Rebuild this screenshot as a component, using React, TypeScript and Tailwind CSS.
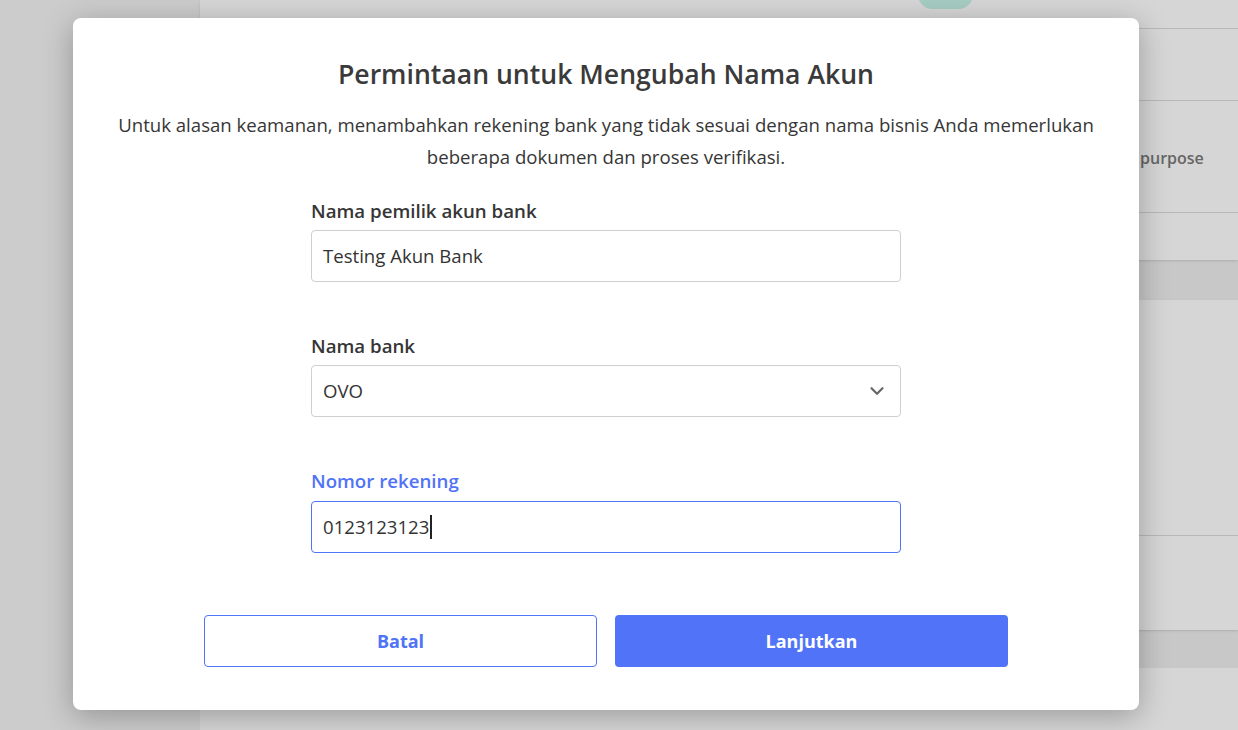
import { ChevronDown } from 'lucide-react';

export default function App() {
  return (
    <div className="relative h-[730px] w-[1238px] overflow-hidden font-['Open_Sans',sans-serif]">
      {/* Page behind the dialog */}
      <div className="flex h-full">
        <aside className="w-[200px] shrink-0 bg-[#f4f4f4]" />
        <main className="flex-1 bg-[#efefef] flex flex-col gap-[40px]">
          <div className="bg-white shadow-sm">
            <div className="h-[29px] border-b border-[#dcdcdc] relative">
              <div className="absolute left-[718px] top-[-20px] h-[29px] w-[55px] rounded-full bg-[#c6f3e8]" />
            </div>
            <div className="h-[72px] border-b border-[#dcdcdc]" />
            <div className="h-[112px] border-b border-[#dcdcdc] flex items-center pl-[940px] pt-[2px]">
              <span className="text-[16px] font-semibold text-[#7a7a7a]">purpose</span>
            </div>
            <div className="h-[47px]" />
          </div>
          <div className="bg-white shadow-sm">
            <div className="h-[236px] border-b border-[#dcdcdc]" />
            <div className="h-[94px]" />
          </div>
          <div className="bg-white h-[80px] mt-[-2px]" />
        </main>
      </div>

      {/* Overlay */}
      <div className="absolute inset-0 bg-black/[0.16]" />

      {/* Dialog */}
      <div className="absolute left-[73px] top-[18px] w-[1066px] h-[692px] rounded-lg bg-white shadow-[0_6px_30px_rgba(0,0,0,0.28)] px-10 pt-10 flex flex-col items-center">
        <h2 className="text-[26.6px] leading-8 font-semibold text-[#3a3a3a] whitespace-nowrap">Permintaan untuk Mengubah Nama Akun</h2>
        <p className="mt-[19px] text-[18.6px] leading-8 text-[#363636] text-center">
          Untuk alasan keamanan, menambahkan rekening bank yang tidak sesuai dengan nama bisnis Anda memerlukan
          beberapa dokumen dan proses verifikasi.
        </p>

        <div className="w-[590px] mt-[26px] flex flex-col">
          <label className="text-[18.7px] leading-6 font-semibold text-[#363636]">Nama pemilik akun bank</label>
          <div className="mt-[7px] h-[52px] rounded border border-[#cfcfcf] px-[11px] flex items-center text-[18.6px] text-[#333]">
            Testing Akun Bank
          </div>

          <label className="mt-[52px] text-[18.7px] leading-6 font-semibold text-[#363636]">Nama bank</label>
          <div className="mt-[7px] h-[52px] rounded border border-[#cfcfcf] pl-[11px] pr-[12px] flex items-center justify-between text-[18.6px] text-[#333]">
            <span>OVO</span>
            <ChevronDown size={22} strokeWidth={2.4} className="text-[#666]" />
          </div>

          <label className="mt-[52px] text-[18.7px] leading-6 font-semibold text-[#5073f7]">Nomor rekening</label>
          <div className="mt-[8px] h-[52px] rounded border border-[#5073f7] px-[11px] flex items-center text-[18.6px] text-[#333]">
            0123123123
            <span className="ml-px inline-block h-[24px] w-[2px] bg-[#222]" />
          </div>
        </div>

        <div className="mt-[62px] flex gap-[18px]">
          <button className="w-[393px] h-[52px] rounded border border-[#5073f7] bg-white text-[18px] font-bold text-[#5073f7]">
            Batal
          </button>
          <button className="w-[393px] h-[52px] rounded bg-[#5073f7] text-[18px] font-bold text-white">
            Lanjutkan
          </button>
        </div>
      </div>
    </div>
  );
}
